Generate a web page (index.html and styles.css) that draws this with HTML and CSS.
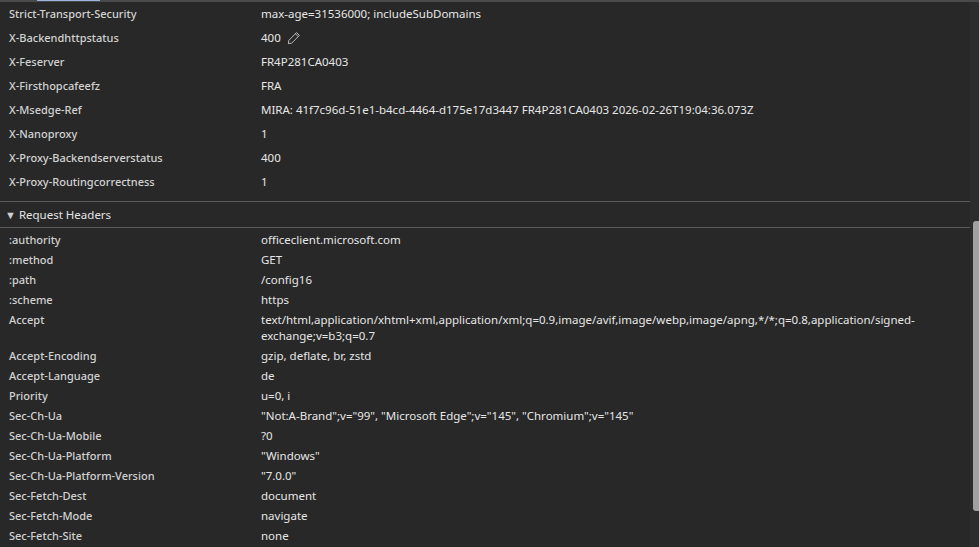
FILE: index.html
```html
<!DOCTYPE html>
<html>
<head>
<meta charset="utf-8">
<link rel="stylesheet" href="styles.css">
</head>
<body>
<div class="panel">
  <div class="topline"><span class="tabmark"></span></div>
  <div class="content">
    <div class="main">
      <div class="section resp">
        <div class="row"><div class="name">Strict-Transport-Security</div><div class="val">max-age=31536000; includeSubDomains</div></div>
        <div class="row"><div class="name">X-Backendhttpstatus</div><div class="val">400 <svg class="pencil" width="14" height="14" viewBox="0 0 14 14"><path d="M9.6 1.6 L12.4 4.4 L4.6 12.2 L1.4 12.6 L1.8 9.4 Z M8.4 2.8 L11.2 5.6" fill="none" stroke="#bdbdbd" stroke-width="1" stroke-linejoin="round"/></svg></div></div>
        <div class="row"><div class="name">X-Feserver</div><div class="val">FR4P281CA0403</div></div>
        <div class="row"><div class="name">X-Firsthopcafeefz</div><div class="val">FRA</div></div>
        <div class="row"><div class="name">X-Msedge-Ref</div><div class="val">MIRA: 41f7c96d-51e1-b4cd-4464-d175e17d3447 FR4P281CA0403 2026-02-26T19:04:36.073Z</div></div>
        <div class="row"><div class="name">X-Nanoproxy</div><div class="val">1</div></div>
        <div class="row"><div class="name">X-Proxy-Backendserverstatus</div><div class="val">400</div></div>
        <div class="row"><div class="name">X-Proxy-Routingcorrectness</div><div class="val">1</div></div>
      </div>
      <div class="sechead"><span class="tri">&#9660;</span>Request Headers</div>
      <div class="section req">
        <div class="row"><div class="name">:authority</div><div class="val">officeclient.microsoft.com</div></div>
        <div class="row"><div class="name">:method</div><div class="val">GET</div></div>
        <div class="row"><div class="name">:path</div><div class="val">/config16</div></div>
        <div class="row"><div class="name">:scheme</div><div class="val">https</div></div>
        <div class="row"><div class="name">Accept</div><div class="val">text/html,application/xhtml+xml,application/xml;q=0.9,image/avif,image/webp,image/apng,*/*;q=0.8,application/signed-<br>exchange;v=b3;q=0.7</div></div>
        <div class="row"><div class="name">Accept-Encoding</div><div class="val">gzip, deflate, br, zstd</div></div>
        <div class="row"><div class="name">Accept-Language</div><div class="val">de</div></div>
        <div class="row"><div class="name">Priority</div><div class="val">u=0, i</div></div>
        <div class="row"><div class="name">Sec-Ch-Ua</div><div class="val">"Not:A-Brand";v="99", "Microsoft Edge";v="145", "Chromium";v="145"</div></div>
        <div class="row"><div class="name">Sec-Ch-Ua-Mobile</div><div class="val">?0</div></div>
        <div class="row"><div class="name">Sec-Ch-Ua-Platform</div><div class="val">"Windows"</div></div>
        <div class="row"><div class="name">Sec-Ch-Ua-Platform-Version</div><div class="val">"7.0.0"</div></div>
        <div class="row"><div class="name">Sec-Fetch-Dest</div><div class="val">document</div></div>
        <div class="row"><div class="name">Sec-Fetch-Mode</div><div class="val">navigate</div></div>
        <div class="row"><div class="name">Sec-Fetch-Site</div><div class="val">none</div></div>
      </div>
    </div>
    <div class="scroll"><div class="thumb"></div></div>
  </div>
</div>
</body>
</html>
```
FILE: styles.css
```css
html, body {
  margin: 0;
  padding: 0;
  background: #282828;
  height: 547px;
  overflow: hidden;
}
.panel {
  font-family: "Noto Sans", "Open Sans", sans-serif;
  font-size: 11.5px;
  color: #e3e3e3;
  height: 547px;
  display: flex;
  flex-direction: column;
}
.topline {
  height: 2px;
  background: #4a4a4a;
  position: relative;
  flex: none;
}
.tabmark {
  position: absolute;
  left: 37px;
  top: 0;
  width: 63px;
  height: 1px;
  background: #9db5e0;
}
.content {
  flex: 1;
  display: flex;
  overflow: hidden;
}
.main {
  flex: 1;
  min-width: 0;
}
.scroll {
  width: 9px;
  background: #2c2c2c;
  flex: none;
  padding-top: 219px;
}
.thumb {
  margin-left: 3px;
  width: 6px;
  height: 290px;
  background: #a1a1a1;
  border-radius: 3px 0 0 3px;
}
.row {
  display: grid;
  grid-template-columns: 252px 1fr;
  padding-left: 9px;
  line-height: 16px;
}
.resp .row {
  padding-top: 4px;
  padding-bottom: 4px;
}
.resp {
  padding-bottom: 7px;
  border-bottom: 1px solid #5a5a5a;
}
.req {
  padding-top: 2px;
}
.req .row {
  padding-top: 2px;
  padding-bottom: 2px;
}
.name {
  color: #d2d2d2;
  font-size: 11px;
  font-weight: 500;
}
.val {
  color: #e6e6e6;
}
.pencil {
  vertical-align: -3px;
  margin-left: 3px;
}
.sechead {
  height: 25px;
  line-height: 25px;
  border-bottom: 1px solid #5a5a5a;
  padding-left: 5px;
  color: #e3e3e3;
}
.tri {
  font-size: 11px;
  margin-right: 3px;
  color: #d0d0d0;
  display: inline-block;
  vertical-align: 0px;
}
```
